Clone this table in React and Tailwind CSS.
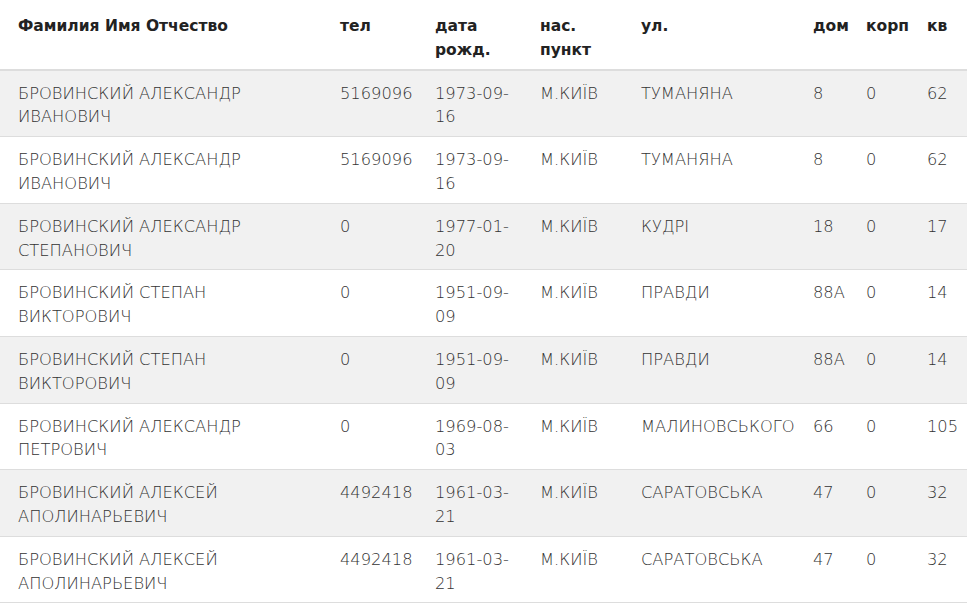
const rows = [
  { name: "БРОВИНСКИЙ АЛЕКСАНДР ИВАНОВИЧ", tel: "5169096", born: "1973-09-16", city: "М.КИЇВ", street: "ТУМАНЯНА", house: "8", corp: "0", apt: "62" },
  { name: "БРОВИНСКИЙ АЛЕКСАНДР ИВАНОВИЧ", tel: "5169096", born: "1973-09-16", city: "М.КИЇВ", street: "ТУМАНЯНА", house: "8", corp: "0", apt: "62" },
  { name: "БРОВИНСКИЙ АЛЕКСАНДР СТЕПАНОВИЧ", tel: "0", born: "1977-01-20", city: "М.КИЇВ", street: "КУДРІ", house: "18", corp: "0", apt: "17" },
  { name: "БРОВИНСКИЙ СТЕПАН ВИКТОРОВИЧ", tel: "0", born: "1951-09-09", city: "М.КИЇВ", street: "ПРАВДИ", house: "88А", corp: "0", apt: "14" },
  { name: "БРОВИНСКИЙ СТЕПАН ВИКТОРОВИЧ", tel: "0", born: "1951-09-09", city: "М.КИЇВ", street: "ПРАВДИ", house: "88А", corp: "0", apt: "14" },
  { name: "БРОВИНСКИЙ АЛЕКСАНДР ПЕТРОВИЧ", tel: "0", born: "1969-08-03", city: "М.КИЇВ", street: "МАЛИНОВСЬКОГО", house: "66", corp: "0", apt: "105" },
  { name: "БРОВИНСКИЙ АЛЕКСЕЙ АПОЛИНАРЬЕВИЧ", tel: "4492418", born: "1961-03-21", city: "М.КИЇВ", street: "САРАТОВСЬКА", house: "47", corp: "0", apt: "32" },
  { name: "БРОВИНСКИЙ АЛЕКСЕЙ АПОЛИНАРЬЕВИЧ", tel: "4492418", born: "1961-03-21", city: "М.КИЇВ", street: "САРАТОВСЬКА", house: "47", corp: "0", apt: "32" },
];

// date breaks after the month, like "1973-09-" / "16"
const DateCell = ({ value }) => (
  <div className="max-w-[85px]">
    {value.slice(0, 8)}
    <wbr />
    {value.slice(8)}
  </div>
);

export default function App() {
  return (
    <div className="bg-white min-h-screen font-['DejaVu_Sans',Verdana,sans-serif] leading-[23.8px]">
      <table className="table-fixed w-[967px] border-collapse">
        <colgroup>
          <col className="w-[332px]" />
          <col className="w-[95px]" />
          <col className="w-[105px]" />
          <col className="w-[101px]" />
          <col className="w-[172px]" />
          <col className="w-[53px]" />
          <col className="w-[61px]" />
          <col className="w-[48px]" />
        </colgroup>
        <thead>
          <tr className="border-b-2 border-[#dddddd] text-left align-top font-bold text-[15.5px] text-[#222222]">
            <th className="pl-[18px] pr-2 pt-[15px] pb-[6px]">Фамилия Имя Отчество</th>
            <th className="px-2 pt-[15px] pb-[6px]">тел</th>
            <th className="px-2 pt-[15px] pb-[6px]">
              <div className="max-w-[75px]">дата рожд.</div>
            </th>
            <th className="px-2 pt-[15px] pb-[6px]">
              <div className="max-w-[75px]">нас. пункт</div>
            </th>
            <th className="px-2 pt-[15px] pb-[6px]">ул.</th>
            <th className="px-2 pt-[15px] pb-[6px]">дом</th>
            <th className="px-2 pt-[15px] pb-[6px]">корп</th>
            <th className="px-2 pt-[15px] pb-[6px]">кв</th>
          </tr>
        </thead>
        <tbody className="font-extralight text-[16.3px] text-[#333333]">
          {rows.map((r, i) => (
            <tr key={i} className={`border-b border-[#dddddd] align-top ${i % 2 === 0 ? "bg-[#f1f1f1]" : "bg-white"}`}>
              <td className="pl-[18px] pr-2 pt-[11px] pb-[7px]">
                <div className="max-w-[260px]">{r.name}</div>
              </td>
              <td className="px-2 pt-[11px] pb-[7px]">{r.tel}</td>
              <td className="px-2 pt-[11px] pb-[7px]">
                <DateCell value={r.born} />
              </td>
              <td className="px-2 pt-[11px] pb-[7px]">{r.city}</td>
              <td className="px-2 pt-[11px] pb-[7px]">{r.street}</td>
              <td className="px-2 pt-[11px] pb-[7px]">{r.house}</td>
              <td className="px-2 pt-[11px] pb-[7px]">{r.corp}</td>
              <td className="px-2 pt-[11px] pb-[7px]">{r.apt}</td>
            </tr>
          ))}
        </tbody>
      </table>
    </div>
  );
}
